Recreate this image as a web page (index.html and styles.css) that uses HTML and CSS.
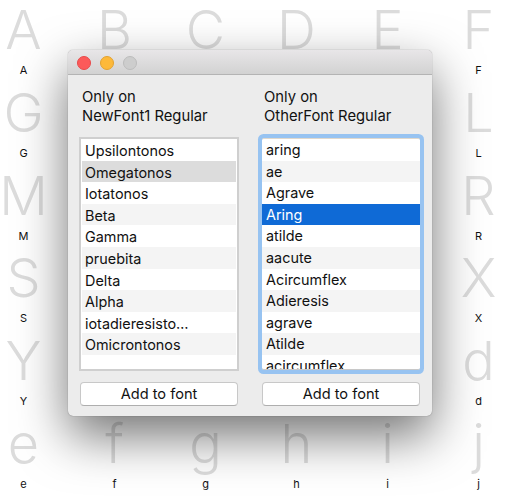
FILE: index.html
```html
<!DOCTYPE html>
<html lang="en">
<head>
  <meta charset="UTF-8">
  <title>Compare fonts</title>
  <link rel="stylesheet" href="styles.css">
</head>
<body>
  <div class="glyph-grid">
    <div class="glyph"><span class="glyph-big">A</span><span class="glyph-name">A</span></div>
    <div class="glyph"><span class="glyph-big">B</span><span class="glyph-name">B</span></div>
    <div class="glyph"><span class="glyph-big">C</span><span class="glyph-name">C</span></div>
    <div class="glyph"><span class="glyph-big">D</span><span class="glyph-name">D</span></div>
    <div class="glyph"><span class="glyph-big">E</span><span class="glyph-name">E</span></div>
    <div class="glyph"><span class="glyph-big">F</span><span class="glyph-name">F</span></div>
    <div class="glyph"><span class="glyph-big">G</span><span class="glyph-name">G</span></div>
    <div class="glyph"><span class="glyph-big">H</span><span class="glyph-name">H</span></div>
    <div class="glyph"><span class="glyph-big">I</span><span class="glyph-name">I</span></div>
    <div class="glyph"><span class="glyph-big">J</span><span class="glyph-name">J</span></div>
    <div class="glyph"><span class="glyph-big">K</span><span class="glyph-name">K</span></div>
    <div class="glyph"><span class="glyph-big">L</span><span class="glyph-name">L</span></div>
    <div class="glyph"><span class="glyph-big">M</span><span class="glyph-name">M</span></div>
    <div class="glyph"><span class="glyph-big">N</span><span class="glyph-name">N</span></div>
    <div class="glyph"><span class="glyph-big">O</span><span class="glyph-name">O</span></div>
    <div class="glyph"><span class="glyph-big">P</span><span class="glyph-name">P</span></div>
    <div class="glyph"><span class="glyph-big">Q</span><span class="glyph-name">Q</span></div>
    <div class="glyph"><span class="glyph-big">R</span><span class="glyph-name">R</span></div>
    <div class="glyph"><span class="glyph-big">S</span><span class="glyph-name">S</span></div>
    <div class="glyph"><span class="glyph-big">T</span><span class="glyph-name">T</span></div>
    <div class="glyph"><span class="glyph-big">U</span><span class="glyph-name">U</span></div>
    <div class="glyph"><span class="glyph-big">V</span><span class="glyph-name">V</span></div>
    <div class="glyph"><span class="glyph-big">W</span><span class="glyph-name">W</span></div>
    <div class="glyph"><span class="glyph-big">X</span><span class="glyph-name">X</span></div>
    <div class="glyph"><span class="glyph-big">Y</span><span class="glyph-name">Y</span></div>
    <div class="glyph"><span class="glyph-big">Z</span><span class="glyph-name">Z</span></div>
    <div class="glyph"><span class="glyph-big">a</span><span class="glyph-name">a</span></div>
    <div class="glyph"><span class="glyph-big">b</span><span class="glyph-name">b</span></div>
    <div class="glyph"><span class="glyph-big">c</span><span class="glyph-name">c</span></div>
    <div class="glyph"><span class="glyph-big">d</span><span class="glyph-name">d</span></div>
    <div class="glyph"><span class="glyph-big">e</span><span class="glyph-name">e</span></div>
    <div class="glyph"><span class="glyph-big">f</span><span class="glyph-name">f</span></div>
    <div class="glyph"><span class="glyph-big">g</span><span class="glyph-name">g</span></div>
    <div class="glyph"><span class="glyph-big">h</span><span class="glyph-name">h</span></div>
    <div class="glyph"><span class="glyph-big">i</span><span class="glyph-name">i</span></div>
    <div class="glyph"><span class="glyph-big">j</span><span class="glyph-name">j</span></div>
  </div>

  <div class="window">
    <div class="titlebar">
      <span class="light light-close"></span>
      <span class="light light-min"></span>
      <span class="light light-zoom"></span>
    </div>
    <div class="window-body">
      <div class="column">
        <p class="column-title">Only on<br>NewFont1 Regular</p>
        <ul class="list">
          <li>Upsilontonos</li>
          <li class="inactive">Omegatonos</li>
          <li>Iotatonos</li>
          <li>Beta</li>
          <li>Gamma</li>
          <li>pruebita</li>
          <li>Delta</li>
          <li>Alpha</li>
          <li>iotadieresisto…</li>
          <li>Omicrontonos</li>
        </ul>
        <button class="add-btn">Add to font</button>
      </div>
      <div class="column">
        <p class="column-title">Only on<br>OtherFont Regular</p>
        <ul class="list list-focus">
          <li>aring</li>
          <li>ae</li>
          <li>Agrave</li>
          <li class="selected">Aring</li>
          <li>atilde</li>
          <li>aacute</li>
          <li>Acircumflex</li>
          <li>Adieresis</li>
          <li>agrave</li>
          <li>Atilde</li>
          <li>acircumflex</li>
        </ul>
        <button class="add-btn">Add to font</button>
      </div>
    </div>
  </div>
</body>
</html>
```

FILE: styles.css
```css
* {
  box-sizing: border-box;
  margin: 0;
  padding: 0;
}

body {
  width: 518px;
  height: 500px;
  overflow: hidden;
  background: white;
  font-family: Inter, "Liberation Sans", sans-serif;
}

/* glyph sheet behind the window */
.glyph-grid {
  display: grid;
  grid-template-columns: repeat(6, 91px);
  grid-auto-rows: 82.8px;
  margin-left: -22px;
}

.glyph {
  display: flex;
  flex-direction: column;
  align-items: center;
}

.glyph-big {
  font-size: 54px;
  font-weight: 350;
  line-height: 60px;
  color: #dcdcdc;
}

.glyph-name {
  font-size: 11px;
  line-height: 20px;
  color: #111;
}

/* window */
.window {
  position: absolute;
  left: 68px;
  top: 50px;
  width: 364px;
  height: 366px;
  background: #ececec;
  border-radius: 5px;
  box-shadow: 0 0 1px rgba(0, 0, 0, 0.5), 0 20px 50px rgba(0, 0, 0, 0.55);
}

.titlebar {
  display: flex;
  align-items: center;
  gap: 9px;
  height: 25px;
  padding: 2px 0 0 9px;
  background: linear-gradient(#e8e6e8, #d2d2d2);
  border-bottom: 1px solid #b4b4b4;
  border-radius: 5px 5px 0 0;
}

.light {
  width: 14px;
  height: 14px;
  border-radius: 50%;
}

.light-close {
  background: #fc5a5a;
  border: 1px solid #e8494a;
}

.light-min {
  background: #fdb93a;
  border: 1px solid #e3a230;
}

.light-zoom {
  background: #cdcdcd;
  border: 1px solid #bcbcbc;
}

.window-body {
  display: grid;
  grid-template-columns: 158px 158px;
  gap: 24px;
  padding: 13px 12px 0;
}

.column {
  display: flex;
  flex-direction: column;
}

.column-title {
  margin-left: 2px;
  font-size: 14.8px;
  line-height: 19px;
  color: #111;
}

.list {
  height: 234px;
  margin: 11px -1px 0;
  overflow: hidden;
  list-style: none;
  background: white;
  border: 2px solid #cfcfcf;
}

.list li {
  height: 21.6px;
  margin: 0 1px;
  padding: 1px 0 0 3px;
  font-size: 14.4px;
  line-height: 21px;
  color: #111;
  white-space: nowrap;
}

.list li:nth-child(even) {
  background: #f4f4f4;
}

.list li.inactive {
  background: #dcdcdc;
}

.list li.selected {
  background: #0f6ad6;
  color: white;
}

.list-focus {
  height: 232px;
  margin: 12px 0 0;
  border: none;
  border-top: 1px solid #e0d8cc;
  border-bottom: 1px solid #c8c8c8;
  box-shadow: 0 0 0 4px #97c3f1;
  border-radius: 2px;
}

.list-focus li {
  margin: 0;
  padding: 0 0 0 4px;
}

.add-btn {
  height: 24px;
  margin-top: 11px;
  background: white;
  border: 1px solid #c8c8c8;
  border-bottom-color: #aeaeae;
  border-radius: 4px;
  font-family: inherit;
  font-size: 14.6px;
  color: #111;
}

.list-focus + .add-btn {
  margin-top: 12px;
}
```
